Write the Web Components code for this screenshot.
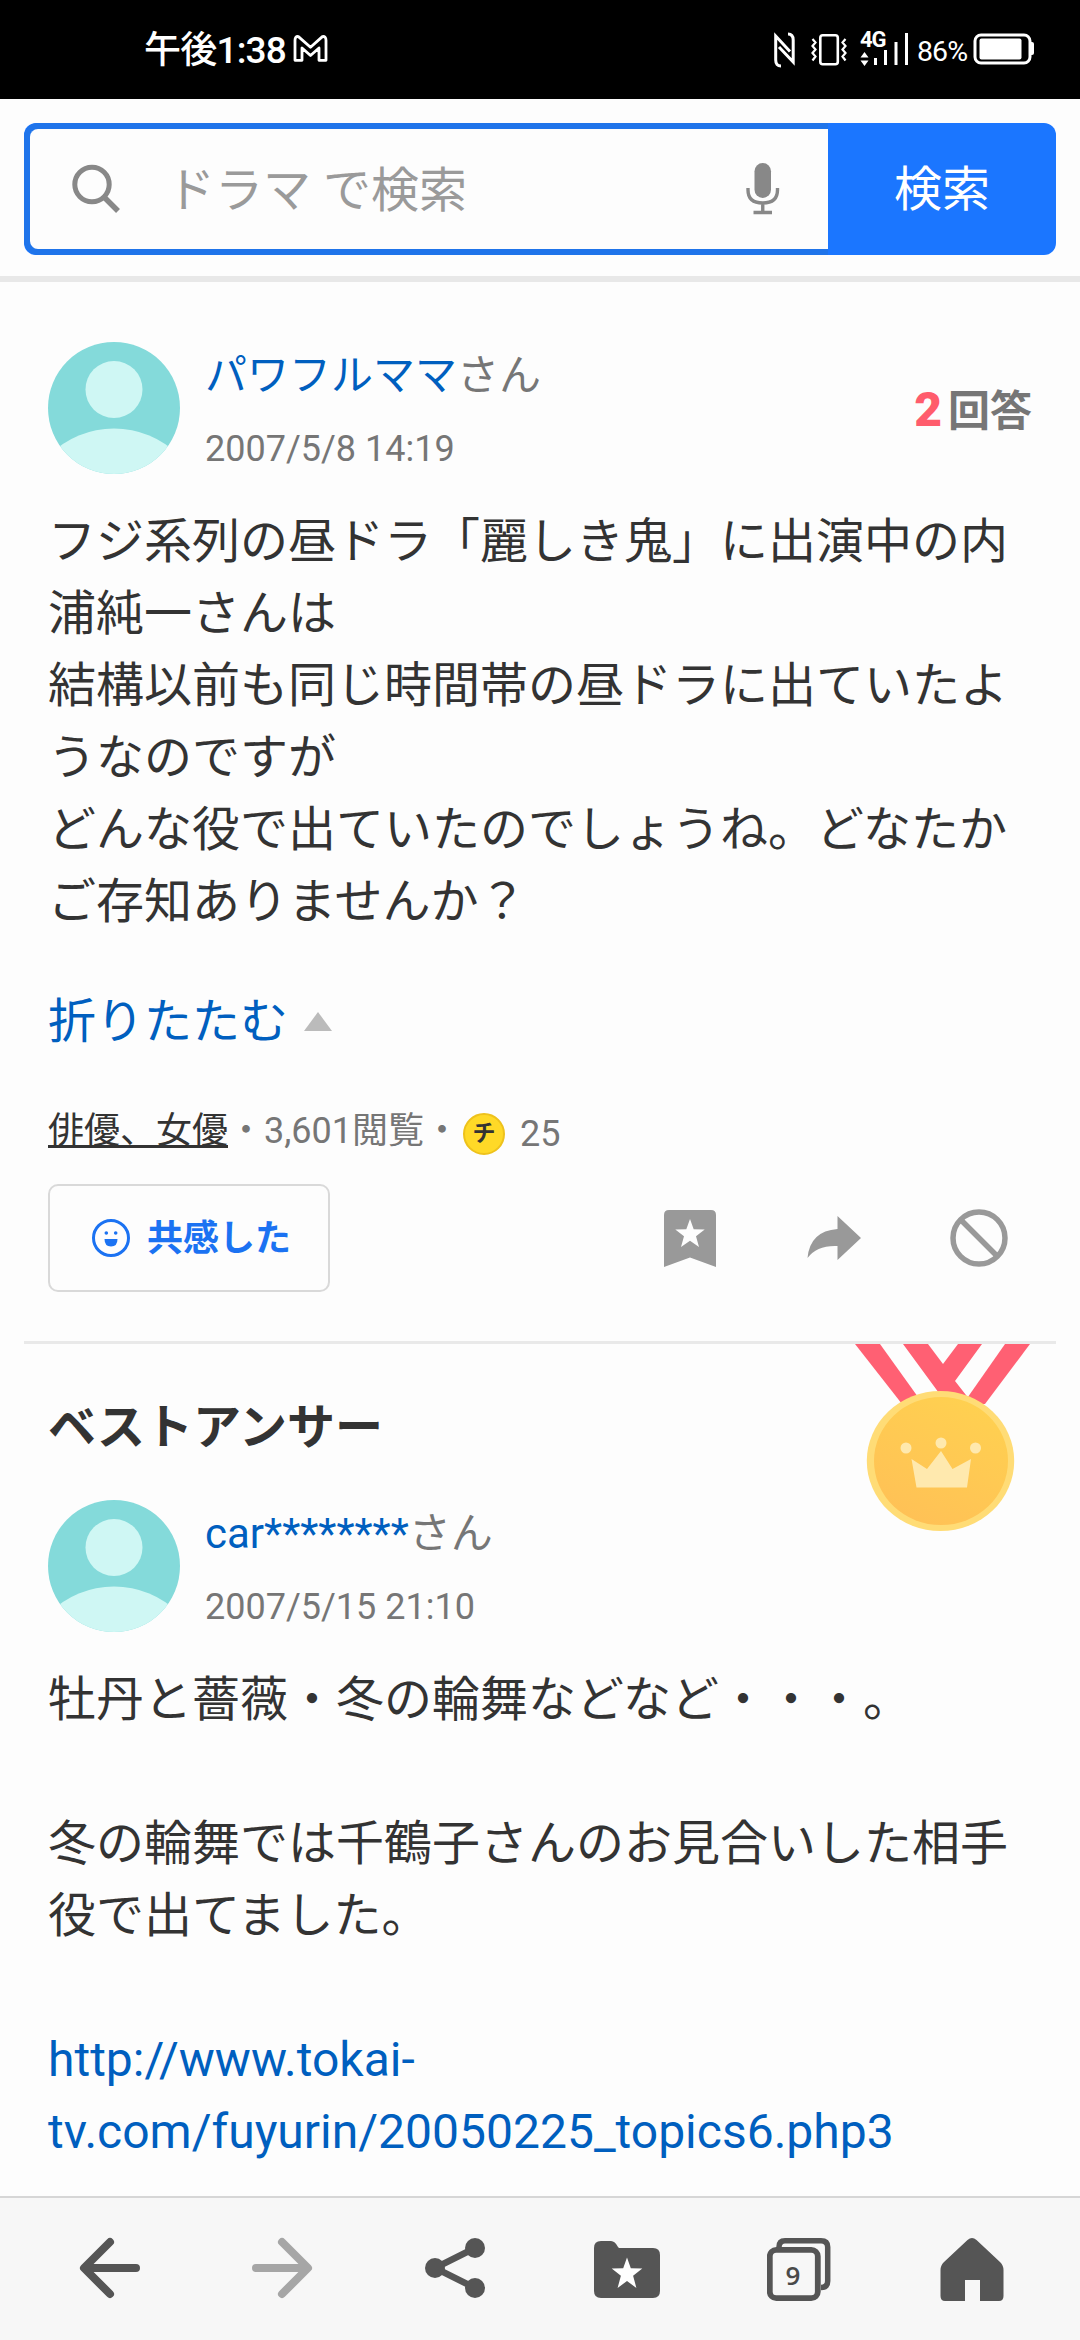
<!DOCTYPE html>
<html lang="ja">
<head>
<meta charset="utf-8">
<title>知恵袋</title>
<style>
html,body{margin:0;padding:0;background:#fdfdfd}
body{width:1080px;height:2340px;overflow:hidden;font-family:Roboto,"Noto Sans CJK JP",sans-serif;color:#333;text-spacing-trim:space-all}
</style>
</head>
<body>
<qa-page></qa-page>
<script>
const define=(name,html)=>{
  const t=document.createElement('template');
  t.innerHTML='<style>*{box-sizing:border-box}svg{display:block;flex:none}</style>'+html;
  customElements.define(name,class extends HTMLElement{
    constructor(){super();this.attachShadow({mode:'open'}).appendChild(t.content.cloneNode(true));}
  });
};

define('status-bar',`
<style>
:host{display:flex;height:99px;background:#000;color:#fff;padding:0 45px 0 144px;justify-content:space-between;flex:none}
.l{display:flex;padding-top:29px;gap:7px}
.t{font-size:37px;line-height:44px;font-weight:500;white-space:nowrap;letter-spacing:-.8px}
.l svg{margin-top:6px}
.r{display:flex;padding-top:30px}
.net{display:flex;flex-direction:column;width:50px;margin-left:12px;position:relative}
.g{position:absolute;left:1px;top:-1px;font-size:22px;line-height:22px;font-weight:700;letter-spacing:-1px}
.p{font-size:28.5px;line-height:43px;margin-left:8px;width:56px;letter-spacing:-.9px;white-space:nowrap}
</style>
<div class="l"><span class="t">午後1:38</span>
<svg width="35" height="27" viewBox="0 0 35 27" fill="none" stroke="#fff" stroke-width="2.8" stroke-linejoin="round"><path d="M2 25.3V5.2Q2 1 5.4 1.6L17.5 12.3 29.4 1.6Q33 1 33 5.2V25.3H26V13L17.5 20.5 9 13V25.3Z"/></svg></div>
<div class="r">
<svg width="21" height="40" viewBox="0 0 21 40" fill="none" stroke="#fff" stroke-width="3"><path d="M7 36Q1.7 36 1.7 30V6L16 21.5M14 4Q19.2 4 19.2 10V32L5 17" stroke-linejoin="miter"/></svg>
<svg style="margin-left:16px" width="36" height="40" viewBox="0 0 36 40" fill="none" stroke="#fff" stroke-width="2.6"><rect x="9.3" y="5.3" width="17.5" height="29" rx="2.5"/><path d="M1.5 9l3 3.5-3 3.5 3 3.5-3 3.5 3 3.5-3 4M34.500 9l-3 3.500 3 3.500-3 3.500 3 3.500-3 3.500 3 4" stroke-width="2.2"/></svg>
<div class="net"><span class="g">4G</span><svg width="50" height="40" viewBox="0 0 50 40" fill="#fff"><path d="M5.500 22l4 5.500h-8zM1.500 30.500h8l-4 5.500zM15 28h3v7h-3zM25 20h3v15h-3zM35.500 12h3v23h-3zM46 3h3v32h-3z"/></svg></div>
<span class="p">86%</span>
<svg width="62" height="40" viewBox="0 0 62 40"><rect x="2" y="5" width="55" height="28" rx="6" fill="none" stroke="#fff" stroke-width="3"/><rect x="6.500" y="8.500" width="42" height="21" rx="2" fill="#fff"/><path d="M58 12h1q2 0 2 2v9q0 2-2 2h-1z" fill="#fff"/></svg>
</div>`);

define('search-bar',`
<style>
:host{display:flex;height:183px;flex:none;padding:24px 24px 0;border-bottom:6px solid #e8e8e8}
.box{display:flex;width:100%;height:132px;border-radius:12px;background:#1b76ff;overflow:hidden}
.in{display:flex;align-items:center;width:804px;border:6px solid #1f74ea;border-right:0;border-radius:14px 0 0 14px;background:#fdfdfd;padding-left:42px}
.ph{font-size:48px;line-height:72px;color:#9a9a9a;width:579px;margin-left:47px;white-space:nowrap;padding-top:3px}
.b{flex:1;text-align:center;color:#fff;font-size:48px;line-height:134px}
</style>
<div class="box"><div class="in">
<svg width="48" height="50" viewBox="0 0 48 50" fill="none" stroke="#888" stroke-width="5"><circle cx="20" cy="20.500" r="17.200"/><path d="M32 33L46 47" stroke-width="5.500"/></svg>
<span class="ph">ドラマ で検索</span>
<svg width="34" height="52" viewBox="0 0 34 52"><rect x="8.500" y="0" width="16.500" height="35" rx="8.200" fill="#888"/><path d="M2 25V27Q2 40 16.750 40T31.500 27V25M16.750 40v10M7.500 49.500h18.500" fill="none" stroke="#888" stroke-width="3.400"/></svg>
</div><div class="b">検索</div></div>`);

define('user-row',`
<style>
:host{display:flex;height:132px;flex:none}
.tx{display:flex;flex-direction:column;margin-left:25px;flex:1;white-space:nowrap}
.n{font-size:42px;line-height:48px;margin-top:10px;color:#767676}
.n ::slotted([slot=name]){color:#005fbf}
.d{font-size:36px;line-height:44px;color:#767676;margin-top:27px}
</style>
<svg width="132" height="132" viewBox="0 0 132 132"><defs><clipPath id="c"><circle cx="66" cy="66" r="66"/></clipPath></defs><g clip-path="url(#c)"><path fill="#84dada" d="M0 0h132v132H0z"/><g fill="#cff7f4"><circle cx="66" cy="47.500" r="28.500"/><circle cx="66" cy="178.500" r="92"/></g></g></svg>
<div class="tx"><div class="n"><slot name="name"></slot>さん</div><div class="d"><slot name="date"></slot></div></div>
<slot></slot>`);

define('answer-count',`
<style>
:host{display:flex;align-items:baseline;gap:6px;height:72px;margin-top:32px;font-weight:700;line-height:72px;white-space:nowrap}
b{font-size:48px;color:#ff5c6c}span{font-size:42px;color:#767676}
</style><b><slot></slot></b><span>回答</span>`);

define('post-body',`
<style>:host{display:block;margin-top:32px;font-size:48px;line-height:72px;color:#333;white-space:nowrap}
::slotted(a){color:#005fbf;text-decoration:none}</style><slot></slot>`);

define('post-meta',`
<style>
:host{display:flex;align-items:center;height:72px;margin-top:37px;font-size:36px;color:#767676;white-space:nowrap}
.a{line-height:42px}
a{color:#333;border-bottom:3px solid #333;display:inline-block;line-height:36px;height:35px}
.coin{width:42px;height:42px;border-radius:50%;margin:5px 0 0 3px;background:#ffd927;border:2.500px solid #eec21c;color:#333;font-weight:700;font-size:23px;line-height:37px;text-align:center}
.p{margin:6px 0 0 15px;line-height:42px}
</style>
<span class="a"><a>俳優、女優</a>・3,601閲覧・</span><span class="coin">チ</span><span class="p">25</span>`);

define('fold-link',`
<style>:host{display:flex;align-items:center;height:72px;margin-top:48px;font-size:48px;line-height:72px;color:#005fbf}svg{margin:-2px 0 0 16px}</style>
折りたたむ<svg width="28" height="19" viewBox="0 0 28 19"><path d="M14 0l14 19H0z" fill="#bbb"/></svg>`);

define('post-actions',`
<style>
:host{display:flex;height:108px;margin-top:17px;align-items:center}
.e{display:flex;align-items:center;width:282px;height:108px;border:2px solid #d9d9d9;border-radius:10px;padding-left:41px;color:#1b72f2;font-size:36px;font-weight:700;line-height:54px;white-space:nowrap;gap:16px}
.e span{padding-top:2px}
.i{display:flex;align-items:center;margin-left:334px}
</style>
<div class="e"><svg width="40" height="40" viewBox="0 0 40 40"><circle cx="20" cy="20" r="17.500" fill="none" stroke="#1b72f2" stroke-width="3"/><circle cx="15.300" cy="15" r="1.800" fill="#1b72f2"/><circle cx="24.700" cy="15" r="1.800" fill="#1b72f2"/><path d="M13.500 21h13q0 7.500-6.500 7.500t-6.500-7.500z" fill="#1b72f2"/></svg><span>共感した</span></div>
<div class="i">
<svg width="52" height="57" viewBox="0 0 52 57"><path fill="#999" d="M5 0h42q5 0 5 5v52L26 47.500 0 57V5q0-5 5-5z"/><path fill="#fdfdfd" d="M26 9l3.700 10.300 11 .3-8.700 6.700 3 10.700-9-6.300-9 6.300 3-10.700-8.700-6.700 11-.3z"/></svg>
<svg style="margin-left:91px" width="54" height="46" viewBox="0 0 54 46"><path fill="#999" d="M30.500 1L54 23 30.500 45V31Q10 30 .500 43 3 16 30.500 14z"/></svg>
<svg style="margin-left:89px" width="58" height="58" viewBox="0 0 58 58" fill="none" stroke="#999" stroke-width="5.500"><circle cx="29" cy="29" r="26"/><path d="M11 11l36 36"/></svg>
</div>`);

define('best-medal',`
<style>:host{display:block;flex:none}</style>
<svg width="178" height="190" viewBox="0 0 178 190"><defs><linearGradient id="g" x1=".8" y1="0" x2=".3" y2="1"><stop offset="0" stop-color="#ffd150"/><stop offset="1" stop-color="#ffc156"/></linearGradient></defs>
<g fill="#ff6073"><path d="M0 0H25L68 60H47z"/><path d="M48 0H73L88 20 103 0H127L100 37 118 60H92z"/><path d="M150 0H175L130 60H108z"/></g>
<ellipse cx="85.500" cy="117" rx="73.700" ry="70" fill="#ffdc76"/><ellipse cx="86" cy="117" rx="67" ry="64" fill="url(#g)"/>
<g fill="#ffe9ae"><path d="M56.500 115L72 125 86 107 97.500 125 116 115 112 143.500H61.500z"/><circle cx="51" cy="104" r="5.500"/><circle cx="86" cy="99" r="5.500"/><circle cx="120.500" cy="104" r="5.500"/></g></svg>`);

define('question-post',`
<style>:host{display:flex;flex-direction:column;padding:60px 48px 0;height:1059px;flex:none}</style>
<user-row><span slot="name">パワフルママ</span><span slot="date">2007/5/8 14:19</span><answer-count>2</answer-count></user-row>
<post-body>フジ系列の昼ドラ「麗しき鬼」に出演中の内<br>浦純一さんは<br>結構以前も同じ時間帯の昼ドラに出ていたよ<br>うなのですが<br>どんな役で出ていたのでしょうね。どなたか<br>ご存知ありませんか？</post-body>
<fold-link></fold-link><post-meta></post-meta><post-actions></post-actions>`);

define('best-answer',`
<style>
:host{display:flex;flex-direction:column;margin:0 24px;border-top:3px solid #e9e9e9;padding:0 24px;flex:1;min-height:0;overflow:hidden}
.h{display:flex;justify-content:space-between;height:156px}
h2{margin:48px 0 0;font-size:48px;line-height:72px;font-weight:700}
best-medal{margin-right:-1px}
</style>
<div class="h"><h2>ベストアンサー</h2><best-medal></best-medal></div>
<user-row><span slot="name">car********</span><span slot="date">2007/5/15 21:10</span></user-row>
<post-body>牡丹と薔薇・冬の輪舞などなど・・・。<br><br>冬の輪舞では千鶴子さんのお見合いした相手<br>役で出てました。<br><br><a>http://www.tokai-<br>tv.com/fuyurin/20050225_topics6.php3</a></post-body>`);

define('nav-bar',`
<style>
:host{display:flex;height:144px;flex:none;background:#f7f7f7;border-top:2px solid #d6d6d6;padding:0 22px 0 24px;align-items:flex-start}
.c{flex:1;display:flex;justify-content:center;padding-top:36px}
</style>
<div class="c"><svg width="64" height="70" viewBox="0 0 64 70" fill="none" stroke="#555" stroke-width="8" stroke-linecap="round" stroke-linejoin="round"><path d="M58 34H8M32 8L6 34 32 60"/></svg></div>
<div class="c"><svg width="64" height="70" viewBox="0 0 64 70" fill="none" stroke="#a6a6a6" stroke-width="8" stroke-linecap="round" stroke-linejoin="round"><path d="M6 34H56M32 8L58 34 32 60"/></svg></div>
<div class="c"><svg width="64" height="70" viewBox="0 0 64 70"><path d="M52 14L12 34 52 54" fill="none" stroke="#555" stroke-width="6.500"/><g fill="#555"><circle cx="52" cy="14" r="10"/><circle cx="12" cy="34" r="10"/><circle cx="52" cy="54" r="10"/></g></svg></div>
<div class="c"><svg width="66" height="70" viewBox="0 0 66 70"><path fill="#555" d="M7 7H17Q21 7 24 13L25 14H59Q66 14 66 21V57Q66 64 59 64H7Q0 64 0 57V14Q0 7 7 7z"/><path fill="#fff" d="M33 23.500l3.800 10.700 11.500.3-9.200 7.200 3.300 12.300L33 47l-9.400 7 3.300-12.300-9.200-7.200 11.500-.3z"/></svg></div>
<div class="c"><svg width="64" height="70" viewBox="0 0 64 70"><path d="M12 13Q12 6.700 18 6.700H54Q60.700 6.700 60.700 13V47Q60.700 53.500 54 53.500" fill="none" stroke="#555" stroke-width="5.500"/><rect x="2.800" y="15.800" width="48" height="48.400" rx="6.500" fill="#f7f7f7" stroke="#555" stroke-width="5.800"/><text x="26" y="50.500" text-anchor="middle" font-family="Open Sans" font-size="26" font-weight="600" fill="#4a4a4a">9</text></svg></div>
<div class="c"><svg width="64" height="70" viewBox="0 0 64 70"><path fill="#555" d="M27.500 6Q32 2 36.500 6L60 28Q63.500 31.500 63.500 36V62Q63.500 67 59 67H40V46H25V67H5Q.500 67 .500 62V36Q.500 31.500 4 28z"/></svg></div>`);

define('qa-page',`
<style>:host{display:flex;flex-direction:column;width:1080px;height:2340px}</style>
<status-bar></status-bar><search-bar></search-bar><question-post></question-post><best-answer></best-answer><nav-bar></nav-bar>`);
</script>
</body>
</html>
